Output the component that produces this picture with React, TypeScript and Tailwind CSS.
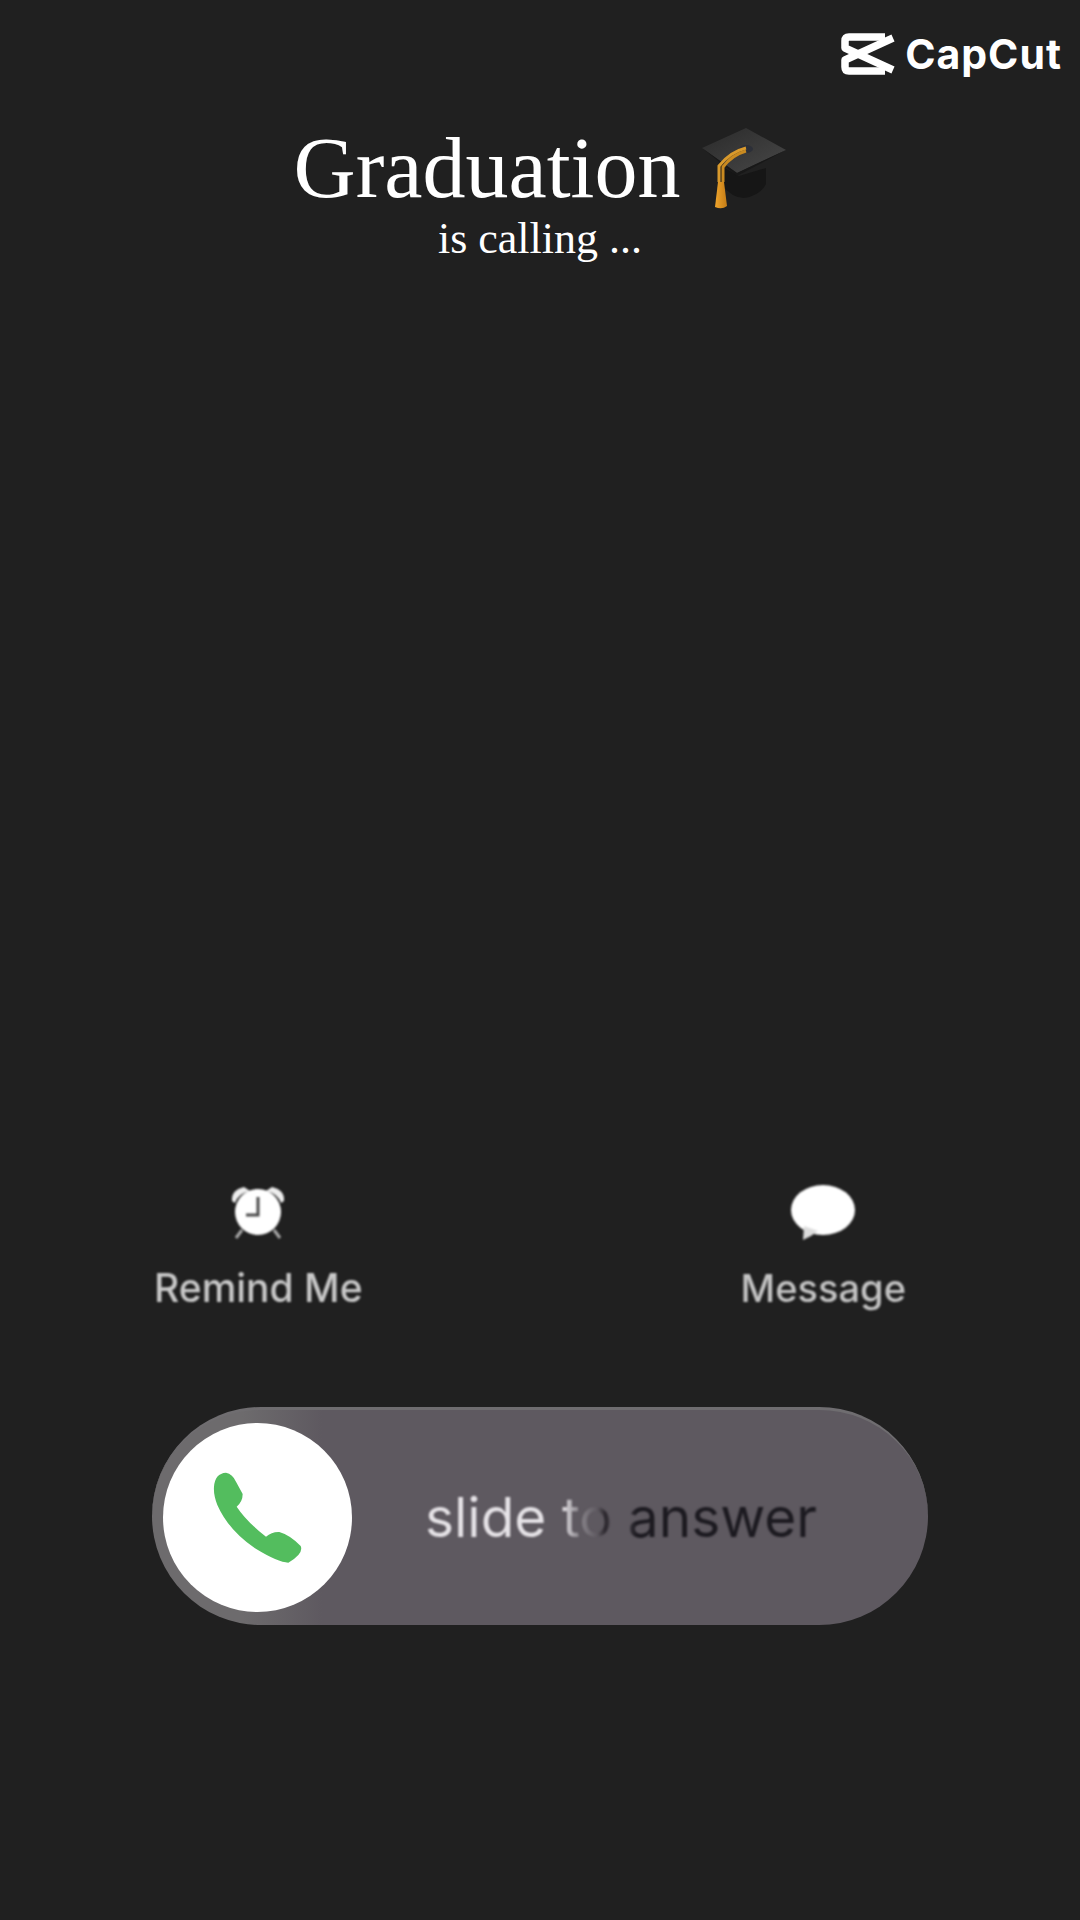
import React from "react";

function CapCutLogo() {
  return (
    <div className="flex items-center gap-[10px] text-white">
      <svg width="54" height="42" viewBox="0 0 54 42" fill="none" stroke="currentColor" strokeWidth="7.5" strokeLinejoin="round">
        <path d="M44 4H8Q4 4 4 8V15L52 37" />
        <path d="M44 38H8Q4 38 4 34V27L52 5" />
      </svg>
      <span className="font-['Inter',sans-serif] font-bold text-[41px] leading-none tracking-[1px]">CapCut</span>
    </div>
  );
}

function GradCap() {
  return (
    <svg width="100" height="92" viewBox="0 0 100 92" className="shrink-0">
      <defs>
        <linearGradient id="board" x1="0" y1="0" x2="1" y2="1">
          <stop offset="0" stopColor="#2a2a2a" />
          <stop offset="1" stopColor="#484848" />
        </linearGradient>
        <linearGradient id="tassel" x1="0" y1="0" x2="1" y2="0">
          <stop offset="0" stopColor="#f0a52c" />
          <stop offset="1" stopColor="#c47c16" />
        </linearGradient>
      </defs>
      <path d="M27 44V62Q38 76 50 76Q66 74 72 62V46L45 54Z" fill="#161616" />
      <path d="M8 26L52 6L92 28L43 51Z" fill="url(#board)" />
      <path d="M8 26L43 51L92 28L43 54Z" fill="#181818" />
      <ellipse cx="52" cy="27" rx="7" ry="4" fill="#2c2f38" />
      <path d="M52 26Q36 30 25 44V60" fill="none" stroke="#d99a2c" strokeWidth="3" />
      <path d="M52 29Q38 33 29 45V60" fill="none" stroke="#c98a20" strokeWidth="3" />
      <path d="M24 60H30L33 84Q28 88 21 85Z" fill="url(#tassel)" />
    </svg>
  );
}

function AlarmIcon() {
  return (
    <svg width="60" height="60" viewBox="0 0 60 60" className="blur-[0.8px]">
      <path d="M4 19Q3 8 16 5L22 9Q11 11 7 21Z" fill="#eeeeee" />
      <path d="M56 19Q57 8 44 5L38 9Q49 11 53 21Z" fill="#eeeeee" />
      <circle cx="30" cy="30" r="23" fill="#ffffff" />
      <path d="M30 15V33H18" fill="none" stroke="#4a4a4a" strokeWidth="3" />
      <path d="M14 48L8 56M46 48L52 56" stroke="#a8a8a8" strokeWidth="3" />
    </svg>
  );
}

function BubbleIcon() {
  return (
    <svg width="66" height="58" viewBox="0 0 66 58" className="blur-[1px]">
      <ellipse cx="33" cy="26" rx="32" ry="25" fill="#ffffff" />
      <path d="M14 42L13 56Q22 52 28 47Z" fill="#dddddd" />
    </svg>
  );
}

function PhoneIcon() {
  return (
    <svg width="95" height="95" viewBox="210 240 285 285" className="blur-[0.6px]">
      <path
        d="M222 290Q225 250 258 248Q278 252 288 275L308 312Q308 335 290 350Q320 395 378 440Q395 425 418 426Q450 435 482 468Q492 490 445 518Q415 518 345 475Q265 420 232 345Q220 315 222 290Z"
        fill="#53bd5e"
      />
    </svg>
  );
}

export default function App() {
  return (
    <div className="w-[1080px] h-[1920px] bg-[#202020] overflow-hidden flex flex-col font-['Inter',sans-serif]">
      <div className="flex justify-end pt-[33px] pr-[18px]">
        <CapCutLogo />
      </div>

      <div className="mt-[47px] flex items-center justify-center gap-[14px] pl-[8px] font-['Liberation_Serif',serif] text-white">
        <span className="text-[86px] leading-[92px]">Graduation</span>
        <GradCap />
      </div>
      <p className="mt-[-1px] text-center font-['Liberation_Serif',serif] text-white text-[44px] leading-[52px]">
        is calling ...
      </p>

      <div className="mt-[917px] flex justify-between pl-[154px] pr-[174px]">
        <div className="flex flex-col items-center gap-[22px]">
          <AlarmIcon />
          <span className="font-medium text-[39px] leading-[48px] text-[#c9c9c9] blur-[1px]">Remind Me</span>
        </div>
        <div className="flex flex-col items-center gap-[22px] pt-[2px]">
          <BubbleIcon />
          <span className="font-medium text-[38px] leading-[48px] text-[#c4c4c4] blur-[1px]">Message</span>
        </div>
      </div>

      <div className="mx-[152px] mt-[95px] h-[218px] rounded-full bg-[linear-gradient(90deg,#6d6b6d_0px,#6d6b6d_90px,#5e5960_170px)] border-t-[3px] border-[#6f6d70] flex items-center pl-[11px]">
        <div className="w-[189px] h-[189px] shrink-0 rounded-full bg-white flex items-center justify-center">
          <PhoneIcon />
        </div>
        <span className="ml-[73px] mt-[-2px] text-[55px] leading-[70px] text-transparent bg-clip-text bg-[linear-gradient(90deg,#e6e3e7_0%,#e6e3e7_35%,#8f8b91_39%,#5e5960_44%,#2a262c_46%,#5e5960_49%,#1c1a20_54%,#1c1a20_100%)] blur-[0.8px]">
          slide to answer
        </span>
      </div>
    </div>
  );
}
